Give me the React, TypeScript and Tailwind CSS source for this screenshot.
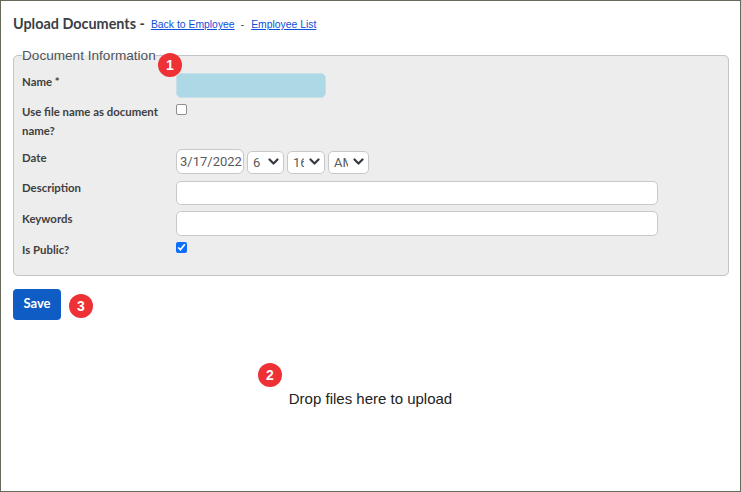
import React from "react";

function Badge({ n, className }: { n: number; className: string }) {
  return (
    <span className={"absolute flex h-6 w-6 items-center justify-center rounded-full bg-[#ee3135] text-[14px] font-bold text-white font-['Liberation_Sans',sans-serif] " + className}>
      {n}
    </span>
  );
}

function Chevron() {
  return (
    <svg className="pointer-events-none absolute right-[5px] top-[8px]" width="11" height="7" viewBox="0 0 11 7" fill="none">
      <path d="M1.5 1.5 L5.5 5.5 L9.5 1.5" stroke="#343a40" strokeWidth="2.2" strokeLinecap="round" strokeLinejoin="round" />
    </svg>
  );
}

function Sel({ w, value }: { w: string; value: string }) {
  return (
    <div className={"relative h-[23px] " + w}>
      <select
        defaultValue={value}
        className="h-full w-full appearance-none rounded-[5px] border border-[#c8c8c8] bg-white pl-[5px] pr-[20px] text-[13px] leading-none text-[#5a5a5a] outline-none font-['Roboto',sans-serif]"
      >
        <option value={value}>{value}</option>
      </select>
      <Chevron />
    </div>
  );
}

function Row({ label, h, children }: { label: React.ReactNode; h: string; children: React.ReactNode }) {
  return (
    <div className={"flex " + h}>
      <div className="w-[154px] shrink-0 text-[11.4px] font-bold leading-[19px] text-[#3f3f3f] font-['Lato','Noto_Sans',sans-serif]">{label}</div>
      <div className="flex-1">{children}</div>
    </div>
  );
}

export default function App() {
  return (
    <div className="relative h-[492px] w-[741px] overflow-hidden border border-[#666a58] bg-white px-3 font-['Liberation_Sans',sans-serif]">
      <div className="flex h-[47px] items-start pt-[14px]">
        <span className="text-[14.4px] font-bold leading-[18px] text-[#3a3f45] font-['Lato','Noto_Sans',sans-serif]">Upload Documents -</span>
        <a href="#" className="ml-[6px] mt-[3px] text-[10.4px] leading-[14px] text-[#0d4fd8] underline">Back to Employee</a>
        <span className="ml-[6px] mt-[3px] text-[10.4px] leading-[14px] text-[#3a3f45]">-</span>
        <a href="#" className="ml-[7px] mt-[3px] text-[10.4px] leading-[14px] text-[#0d4fd8] underline">Employee List</a>
      </div>

      <fieldset className="relative h-[228px] w-[716px] rounded-[5px] border border-[#c4c4c4] bg-[#ededed] pl-2 pr-[69px]">
        <legend className="h-[15px] text-[13.6px] leading-[15px] text-[#50555a]">Document Information</legend>
        <div className="mt-[10px] flex flex-col">
          <Row label={<span className="relative top-[-1px]">Name *</span>} h="h-[31px]">
            <input readOnly className="h-[25px] w-[150px] rounded-[5px] border border-[#c9dfe8] bg-[#add8e6] outline-none" />
          </Row>
          <Row label={<span className="relative top-[-2px] block">Use file name as document name?</span>} h="h-[45px]">
            <input type="checkbox" readOnly className="mt-0 block h-[11px] w-[11px] appearance-none rounded-[2px] border border-[#8f8f8f] bg-white" />
          </Row>
          <Row label={<span className="relative top-[-1px] block">Date</span>} h="h-[32px]">
            <div className="flex items-center gap-[3px]">
              <input readOnly value="3/17/2022" className="h-[25px] w-[68px] rounded-[6px] border border-[#c8c8c8] bg-white pl-[3px] text-[13px] text-[#5a5a5a] outline-none font-['Roboto',sans-serif]" />
              <Sel w="w-[37px]" value="6" />
              <Sel w="w-[38px]" value="16" />
              <Sel w="w-[41px]" value="AM" />
            </div>
          </Row>
          <Row label={<span className="relative top-[-3px] block">Description</span>} h="h-[30px]">
            <input readOnly className="block h-[24px] w-[482px] rounded-[5px] border border-[#c8c8c8] bg-white outline-none" />
          </Row>
          <Row label={<span className="relative top-[-2px] block">Keywords</span>} h="h-[31px]">
            <input readOnly className="block h-[25px] w-[482px] rounded-[5px] border border-[#c8c8c8] bg-white outline-none" />
          </Row>
          <Row label={<span className="relative top-[-2px] block">Is Public?</span>} h="h-[25px]">
            <input type="checkbox" defaultChecked className="mt-0 block h-[11px] w-[11px] accent-[#0d6efd]" />
          </Row>
        </div>
        <Badge n={1} className="left-[144px] top-[-10px]" />
      </fieldset>

      <div className="relative mt-[13px]">
        <button className="block h-[31px] w-[48px] rounded-[4px] bg-[#0f5cc4] pb-[2px] text-[13px] font-bold text-white font-['Lato','Noto_Sans',sans-serif]">Save</button>
        <Badge n={3} className="left-[56px] top-[5px]" />
      </div>

      <div className="relative mt-[70px] text-center text-[15px] leading-[18px] text-[#222]">
        <span>Drop files here to upload</span>
        <Badge n={2} className="left-[245px] top-[-27px]" />
      </div>
    </div>
  );
}
